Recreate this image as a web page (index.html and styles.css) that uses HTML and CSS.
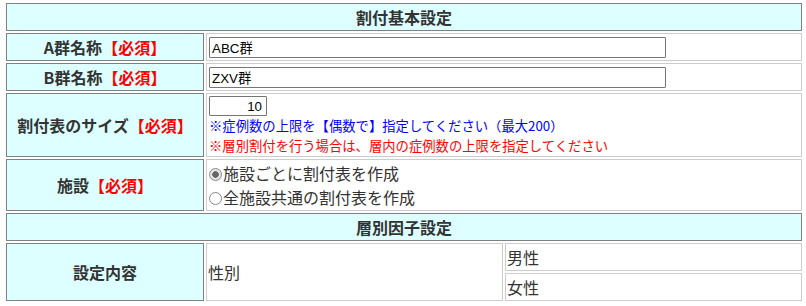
FILE: index.html
```html
<!DOCTYPE html>
<html lang="ja">
<head>
    <meta charset="UTF-8">
    <title>割付基本設定</title>
    <link rel="stylesheet" href="styles.css">
</head>
<body>
    <table class="form-table">
        <colgroup>
            <col class="col-label">
            <col class="col-half">
            <col class="col-half">
        </colgroup>
        <tr>
            <th colspan="3" class="section">割付基本設定</th>
        </tr>
        <tr>
            <th class="label">A群名称<span class="req">【必須】</span></th>
            <td colspan="2"><input type="text" class="name-input" value="ABC群"></td>
        </tr>
        <tr>
            <th class="label">B群名称<span class="req">【必須】</span></th>
            <td colspan="2"><input type="text" class="name-input" value="ZXV群"></td>
        </tr>
        <tr>
            <th class="label">割付表のサイズ<span class="req">【必須】</span></th>
            <td colspan="2">
                <div class="size-line"><input type="text" class="size-input" value="10"></div>
                <div class="note note-blue">※症例数の上限を【偶数で】指定してください（最大200）</div>
                <div class="note note-red">※層別割付を行う場合は、層内の症例数の上限を指定してください</div>
            </td>
        </tr>
        <tr>
            <th class="label">施設<span class="req">【必須】</span></th>
            <td colspan="2">
                <label class="radio-line"><input type="radio" name="site" checked>施設ごとに割付表を作成</label>
                <label class="radio-line"><input type="radio" name="site">全施設共通の割付表を作成</label>
            </td>
        </tr>
        <tr>
            <th colspan="3" class="section">層別因子設定</th>
        </tr>
        <tr>
            <th class="label" rowspan="2">設定内容</th>
            <td rowspan="2">性別</td>
            <td>男性</td>
        </tr>
        <tr>
            <td>女性</td>
        </tr>
    </table>
</body>
</html>
```

FILE: styles.css
```css
body {
    margin: 0;
    font-family: "Noto Sans CJK JP", sans-serif;
    color: #333333;
    background-color: #ffffff;
}
.form-table {
    margin: 1px 0 0 4px;
    width: 800px;
    table-layout: fixed;
    border-collapse: separate;
    border-spacing: 2px;
}
.col-label {
    width: 198px;
}
.col-half {
    width: 297px;
}
.form-table th {
    background-color: #ddffff;
    border: 1px solid #808080;
    padding: 1px;
    font-size: 16px;
    line-height: 24px;
    font-weight: bold;
    color: #333333;
    text-align: center;
}
.form-table td {
    border: 1px solid #cccccc;
    padding: 1px;
    font-size: 16px;
    line-height: 24px;
    color: #333333;
    text-align: left;
    vertical-align: middle;
}
.req {
    color: #ff0000;
}
.name-input,
.size-input {
    box-sizing: border-box;
    border: 1px solid #767676;
    border-radius: 1px;
    padding: 0 2px;
    font-family: "Liberation Sans", "Noto Sans CJK JP", sans-serif;
    font-size: 13.33px;
    color: #000000;
    vertical-align: top;
}
.name-input {
    width: 457px;
    height: 21px;
    margin: 2px 0 0 1px;
}
.size-line {
    height: 21px;
    line-height: 21px;
}
.size-input {
    width: 58px;
    height: 20px;
    margin: 1px 0 0 1px;
    text-align: right;
    padding-right: 4px;
}
.note {
    font-size: 13.33px;
    line-height: 20px;
    padding-left: 1px;
}
.note-blue {
    color: #0000ff;
}
.note-red {
    color: #ff0000;
    line-height: 19px;
}
.radio-line {
    display: block;
    font-size: 16px;
    line-height: 24px;
}
.radio-line input {
    appearance: none;
    -webkit-appearance: none;
    box-sizing: border-box;
    width: 13px;
    height: 13px;
    margin: 0 1px 0 1px;
    border: 1px solid #888888;
    border-radius: 50%;
    background-color: #ffffff;
    vertical-align: -1px;
}
.radio-line input:checked {
    background: radial-gradient(circle, #666666 0 3px, #e6e6e6 3.5px);
}
```
